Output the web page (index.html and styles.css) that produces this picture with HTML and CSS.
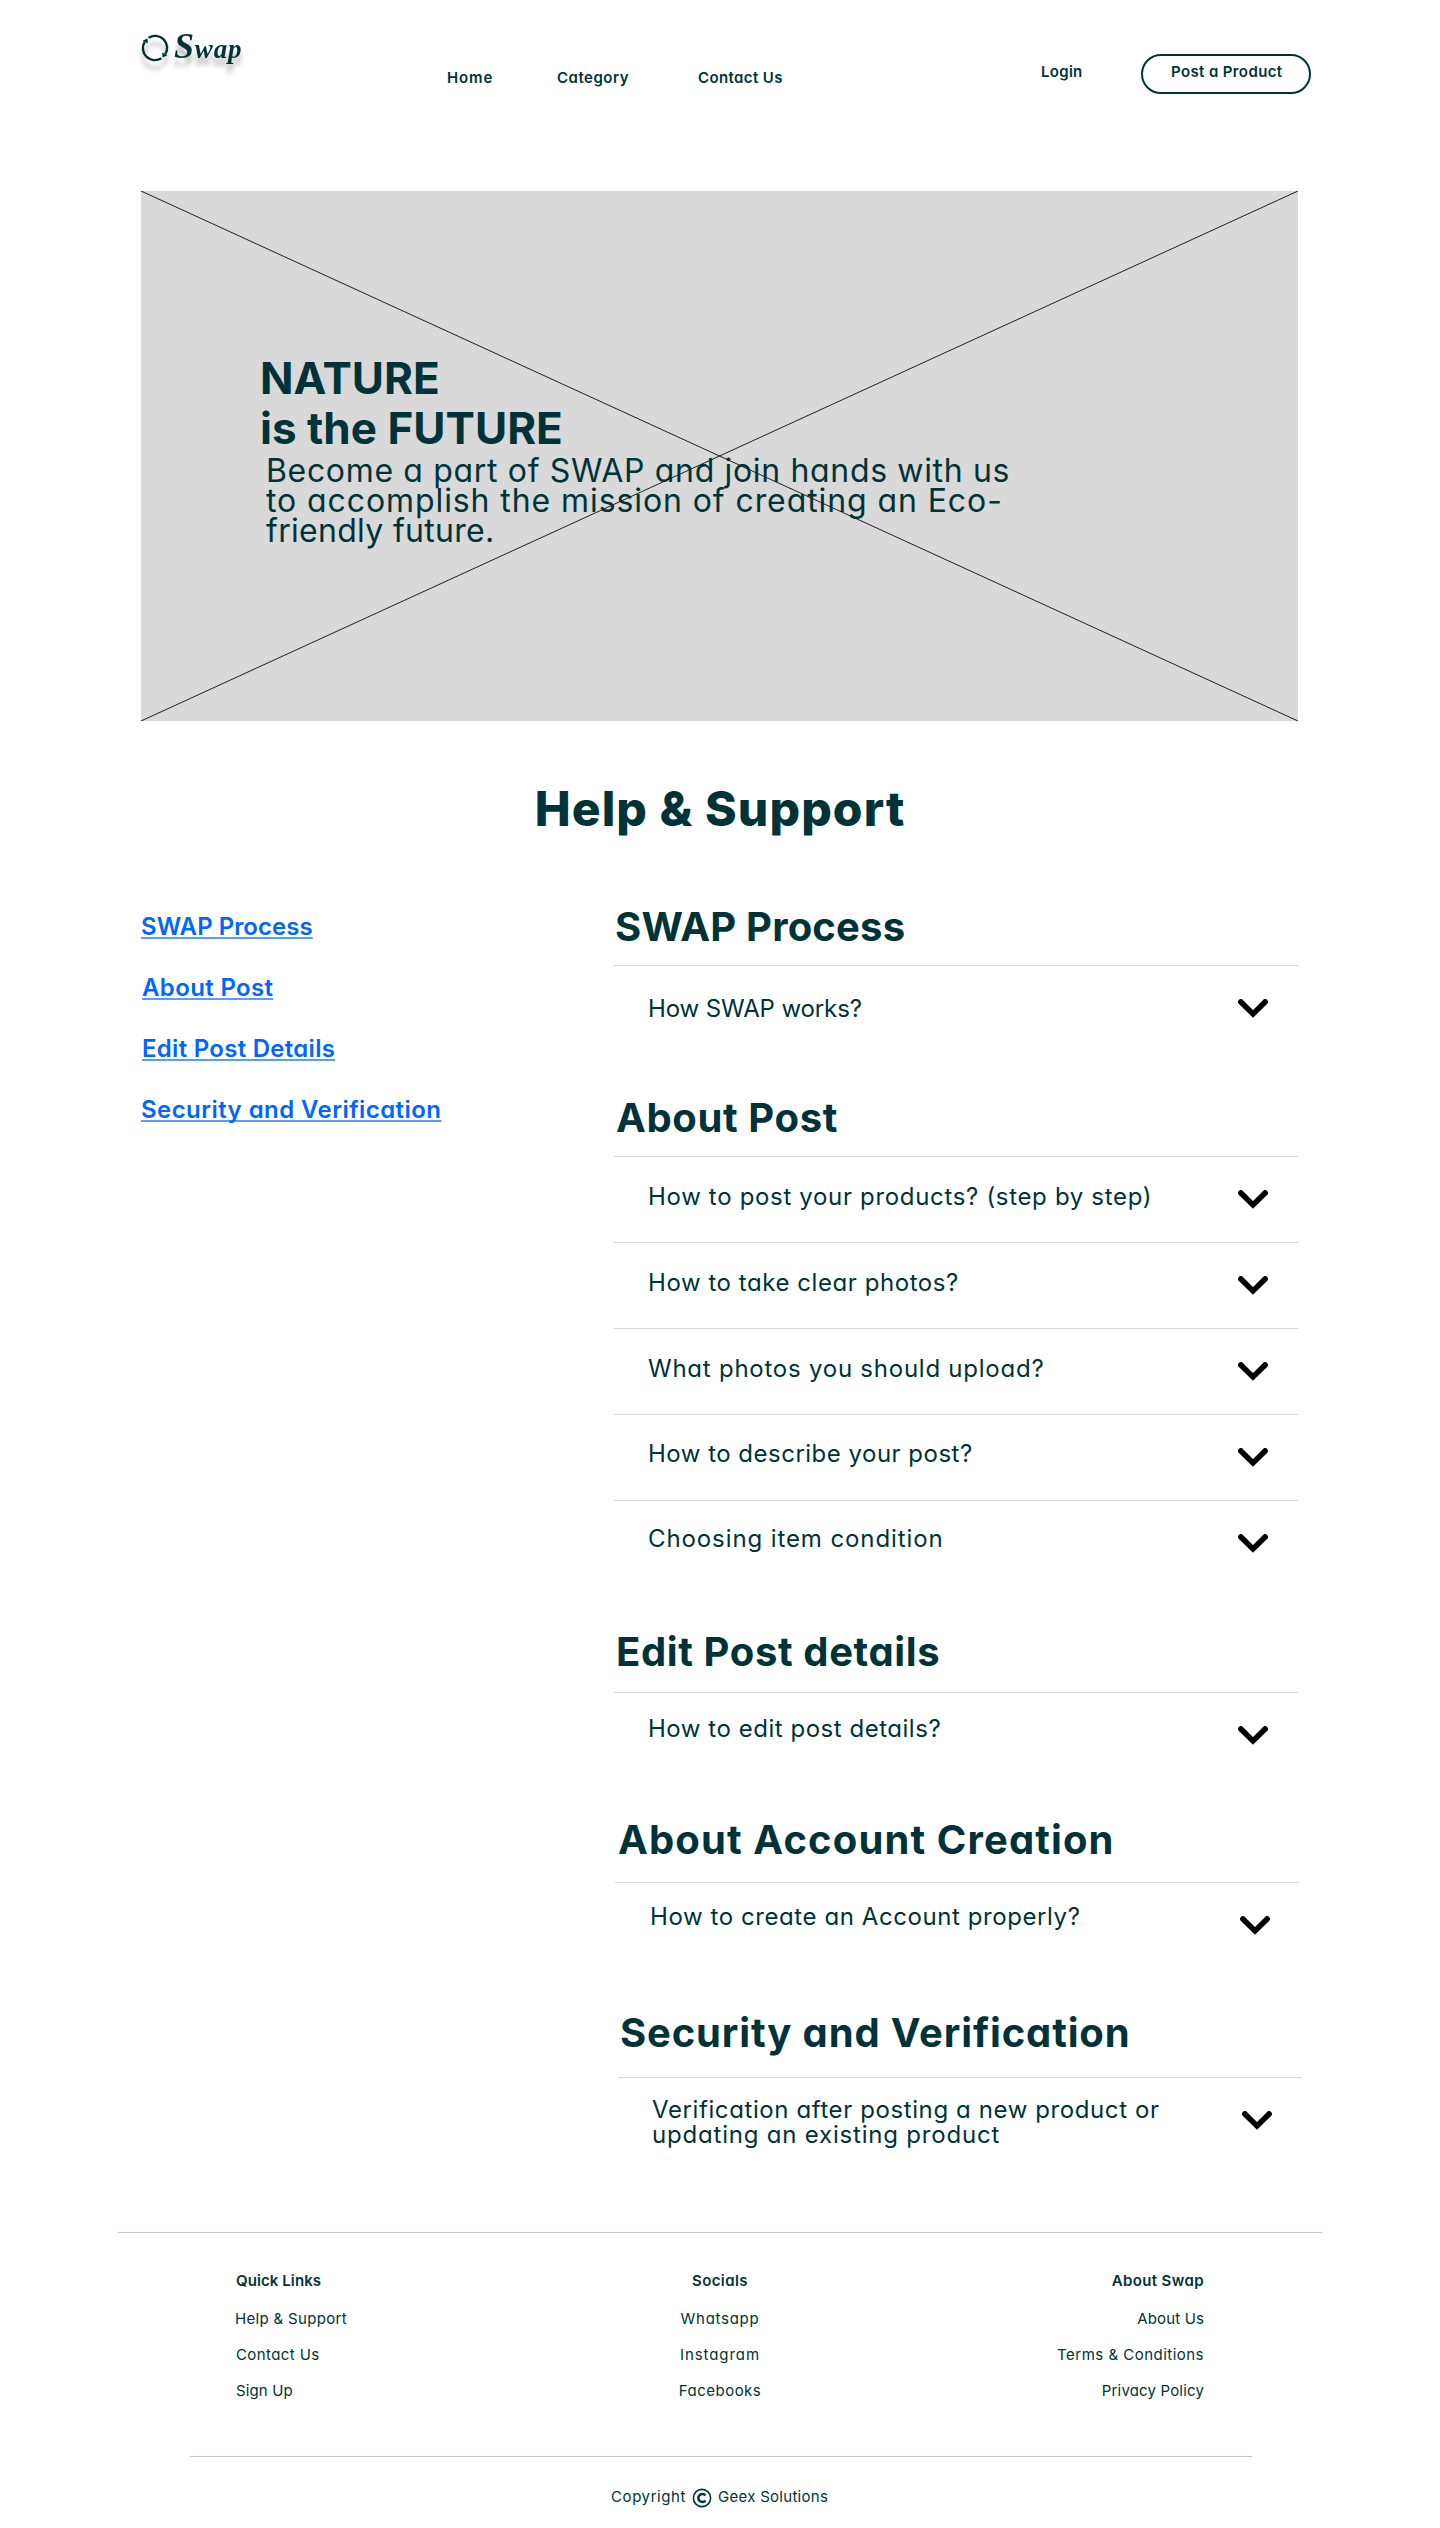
FILE: index.html
```html
<!DOCTYPE html>
<html lang="en">
<head>
<meta charset="utf-8">
<title>Swap - Help &amp; Support</title>
<link rel="stylesheet" href="styles.css">
</head>
<body>
<svg class="sprite" aria-hidden="true">
  <symbol id="chevron" viewBox="0 0 30 19">
    <path d="M2.9 2.9 15 14.9 27.1 2.9" fill="none" stroke="#000" stroke-width="5.6" stroke-linecap="round"/>
  </symbol>
</svg>

<header class="header">
  <a class="logo" href="#">
    <svg class="logo-mark" viewBox="0 0 28 28" width="28" height="28">
      <g fill="none" stroke="#003337" stroke-width="2.4">
        <path d="M7.6 3.8A12 12 0 0 1 24.2 20.4"/>
        <path d="M20.4 24.2A12 12 0 0 1 3.8 7.6"/>
      </g>
      <path fill="#003337" d="M1.8 6.4 6.6 4.4 6.8 9.4zM26.2 21.6 21.4 23.6 21.2 18.6z"/>
    </svg>
    <span class="logo-name"><span class="logo-s">S</span>wap</span>
  </a>
  <nav class="nav">
    <a class="home" href="#">Home</a>
    <a class="category" href="#">Category</a>
    <a class="contact" href="#">Contact Us</a>
  </nav>
  <a class="login" href="#">Login</a>
  <a class="post-button" href="#">Post a Product</a>
</header>

<section class="hero">
  <svg class="hero-cross" viewBox="0 0 1157 530" width="1157" height="530">
    <path d="M0 0 1157 530M0 530 1157 0" stroke="#1e1e1e" stroke-width="1"/>
  </svg>
  <h1 class="hero-title"><span class="nature">NATURE</span><br><span class="future">is the FUTURE</span></h1>
  <p class="hero-text"><span class="line-a">Become a part of SWAP and join hands with us</span><br><span class="line-b">to accomplish the mission of creating an Eco-</span><br><span class="line-c">friendly future.</span></p>
</section>

<h2 class="page-title">Help &amp; Support</h2>

<main class="content">
  <nav class="topics">
    <a class="topic-swap" href="#swap">SWAP Process</a>
    <a class="topic-about" href="#about">About Post</a>
    <a class="topic-edit" href="#edit">Edit Post Details</a>
    <a class="topic-security" href="#security">Security and Verification</a>
  </nav>

  <div class="faq">
    <section class="group group-swap" id="swap">
      <h3>SWAP Process</h3>
      <div class="row"><p class="q-works">How SWAP works?</p><svg class="chevron"><use href="#chevron"/></svg></div>
    </section>
    <section class="group group-about" id="about">
      <h3>About Post</h3>
      <div class="row"><p class="q-post">How to post your products? (step by step)</p><svg class="chevron"><use href="#chevron"/></svg></div>
      <div class="row"><p class="q-clear">How to take clear photos?</p><svg class="chevron"><use href="#chevron"/></svg></div>
      <div class="row"><p class="q-upload">What photos you should upload?</p><svg class="chevron"><use href="#chevron"/></svg></div>
      <div class="row"><p class="q-describe">How to describe your post?</p><svg class="chevron"><use href="#chevron"/></svg></div>
      <div class="row"><p class="q-condition">Choosing item condition</p><svg class="chevron"><use href="#chevron"/></svg></div>
    </section>
    <section class="group group-edit" id="edit">
      <h3>Edit Post details</h3>
      <div class="row"><p class="q-edit">How to edit post details?</p><svg class="chevron"><use href="#chevron"/></svg></div>
    </section>
    <section class="group group-account" id="account">
      <h3>About Account Creation</h3>
      <div class="row"><p class="q-account">How to create an Account properly?</p><svg class="chevron"><use href="#chevron"/></svg></div>
    </section>
    <section class="group group-security" id="security">
      <h3>Security and Verification</h3>
      <div class="row"><p class="q-verify">Verification after posting a new product or<br><span class="q-update">updating an existing product</span></p><svg class="chevron"><use href="#chevron"/></svg></div>
    </section>
  </div>
</main>

<footer class="footer">
  <div class="footer-columns">
    <div class="footer-column">
      <h4 class="f-quick">Quick Links</h4>
      <a class="f-help" href="#">Help &amp; Support</a>
      <a class="f-contact" href="#">Contact Us</a>
      <a class="f-sign" href="#">Sign Up</a>
    </div>
    <div class="footer-column footer-center">
      <h4 class="f-socials">Socials</h4>
      <a class="f-whatsapp" href="#">Whatsapp</a>
      <a class="f-instagram" href="#">Instagram</a>
      <a class="f-facebooks" href="#">Facebooks</a>
    </div>
    <div class="footer-column footer-right">
      <h4 class="f-swap">About Swap</h4>
      <a class="f-about" href="#">About Us</a>
      <a class="f-terms" href="#">Terms &amp; Conditions</a>
      <a class="f-privacy" href="#">Privacy Policy</a>
    </div>
  </div>
  <div class="copyright">
    <span class="c-left">Copyright</span>
    <svg class="c-icon" viewBox="0 0 20 20" width="20" height="20">
      <g fill="none" stroke="#003337">
        <circle cx="10" cy="10" r="8.6" stroke-width="1.6"/>
        <path d="M13.4 7.5A4 4 0 1 0 13.4 12.5" stroke-width="2.5"/>
      </g>
    </svg>
    <span class="c-right">Geex Solutions</span>
  </div>
</footer>
</body>
</html>
```
FILE: styles.css
```css
* { box-sizing: border-box; margin: 0; padding: 0; }
body {
  width: 1440px;
  height: 2528px;
  background: #fff;
  color: #003337;
  font-family: Inter, "Open Sans", sans-serif;
  font-feature-settings: "cv11";
  overflow: hidden;
}
a { color: inherit; text-decoration: none; white-space: nowrap; }
.sprite { display: none; }

/* Header */
.header {
  display: flex;
  align-items: flex-start;
  height: 191px;
  padding-left: 141px;
  font-size: 15px;
  line-height: 22px;
  font-weight: 600;
}
.logo {
  display: flex;
  width: 305px;
  padding-top: 24px;
  filter: drop-shadow(0 8px 2.5px rgba(0, 0, 0, .28));
}
.logo-mark { margin-top: 10px; }
.logo-name {
  margin-left: 5px;
  font: italic bold 27px/44px "Liberation Serif", serif;
  letter-spacing: .8px;
}
.logo-s { font-size: 36px; }
.nav { display: flex; width: 595px; padding-top: 67px; }
.home { width: 110px; margin-left: 1px; letter-spacing: .9px; }
.category { width: 141px; letter-spacing: .5px; }
.contact { letter-spacing: .38px; }
.login { width: 100px; margin-top: 61px; letter-spacing: .3px; }
.post-button {
  width: 170px;
  height: 40px;
  margin-top: 54px;
  padding: 5px 0 0 28px;
  border: 2px solid #003337;
  border-radius: 20px;
  letter-spacing: .38px;
}

/* Hero */
.hero {
  position: relative;
  width: 1157px;
  height: 530px;
  margin-left: 141px;
  padding: 162px 0 0 119px;
  background: #d9d9d9;
}
.hero-cross { position: absolute; left: 0; top: 0; }
.hero-title {
  position: relative;
  font-size: 44px;
  line-height: 50px;
  font-weight: 700;
  text-shadow: 0 0 40px rgba(255, 255, 255, .15);
}
.nature { letter-spacing: 0; }
.future { letter-spacing: .03px; }
.hero-text {
  margin: 3px 0 0 6px;
  font-size: 32px;
  line-height: 30px;
  white-space: nowrap;
}
.line-a { letter-spacing: .66px; }
.line-b { letter-spacing: .91px; }
.line-c { letter-spacing: .3px; }

/* Help content */
.page-title {
  margin-top: 58px;
  font-size: 48px;
  line-height: 60px;
  font-weight: 800;
  letter-spacing: 1.09px;
  text-align: center;
}
.content { display: flex; padding: 63px 0 0 141px; }
.topics {
  display: flex;
  flex-direction: column;
  align-items: flex-start;
  gap: 31px;
  width: 473px;
  padding-top: 10px;
  font-size: 24px;
  line-height: 30px;
  font-weight: 600;
  color: #0066ff;
  text-decoration-skip-ink: none;
}
.topics a {
  text-decoration: underline 2px rgba(0, 102, 255, .65);
  text-underline-offset: 2px;
}
.topic-swap { letter-spacing: .06px; }
.topic-about, .topic-edit { margin-left: 1px; }
.topic-about { letter-spacing: .36px; }
.topic-edit { letter-spacing: .28px; }
.topic-security { letter-spacing: .44px; }

.faq { width: 690px; }
.group { width: 684px; }
.group h3 {
  height: 63px;
  padding-left: 2px;
  font-size: 40px;
  line-height: 50px;
  font-weight: 700;
  white-space: nowrap;
}
.row {
  display: flex;
  justify-content: space-between;
  height: 86px;
  padding: 27px 30px 0 34px;
  border-top: 1px solid #d9d9d9;
  font-size: 24px;
  line-height: 25px;
  white-space: nowrap;
}
.row:last-child { height: 127px; }
.chevron { width: 30px; height: 19px; margin-top: 6px; }

.group-swap h3 { letter-spacing: .19px; padding-left: 1px; }
.group-swap .row { height: 128px; }
.group-about h3 { letter-spacing: .62px; }
.group-edit h3 { height: 65px; letter-spacing: .62px; }
.group-edit .row { height: 123px; }
.group-account { margin-left: 1px; }
.group-account h3 { height: 67px; padding-left: 3px; letter-spacing: 1.12px; }
.group-account .row { height: 126px; padding: 27px 29px 0 35px; }
.group-security { margin-left: 4px; }
.group-security h3 { height: 69px; letter-spacing: .85px; }
.group-security .row { height: 155px; }

.q-works { margin-top: 3px; letter-spacing: -.12px; }
.q-post { letter-spacing: .67px; }
.q-clear { letter-spacing: .56px; }
.q-upload { letter-spacing: .76px; }
.q-describe { margin-top: -1px; letter-spacing: .49px; }
.q-condition { margin-top: -2px; letter-spacing: .9px; }
.q-edit { margin-top: -4px; letter-spacing: .53px; }
.q-account { margin-top: -6px; letter-spacing: .58px; }
.q-verify { margin-top: -8px; letter-spacing: .6px; }
.q-update { letter-spacing: .8px; }

/* Footer */
.footer {
  width: 1204px;
  margin-left: 118px;
  border-top: 1px solid #bfccce;
  font-size: 15px;
  line-height: 22px;
}
.footer-columns {
  display: grid;
  grid-template-columns: repeat(3, 1fr);
  width: 1062px;
  height: 224px;
  margin-left: 72px;
  padding: 37px 48px 0 46px;
  border-bottom: 1px solid #bfccce;
}
.footer-column { display: flex; flex-direction: column; align-items: flex-start; gap: 14px; }
.footer-column h4 { height: 24px; font-size: 15px; font-weight: 600; }
.footer-center { align-items: center; }
.footer-right { align-items: flex-end; }
.f-quick { letter-spacing: .09px; }
.f-help { margin-left: -1px; letter-spacing: .33px; }
.f-contact { letter-spacing: .4px; }
.f-sign { letter-spacing: .13px; }
.f-socials { letter-spacing: .4px; }
.f-whatsapp { letter-spacing: .72px; }
.f-instagram { letter-spacing: .92px; }
.f-facebooks { letter-spacing: .5px; }
.f-swap { letter-spacing: .38px; }
.f-about { letter-spacing: .13px; }
.f-terms { letter-spacing: .48px; }
.f-privacy { letter-spacing: .17px; }

.copyright { display: flex; padding: 29px 0 0 493px; }
.c-left { width: 81px; letter-spacing: .59px; }
.c-icon { margin-top: 2px; }
.c-right { margin-left: 6px; letter-spacing: .28px; }
```
